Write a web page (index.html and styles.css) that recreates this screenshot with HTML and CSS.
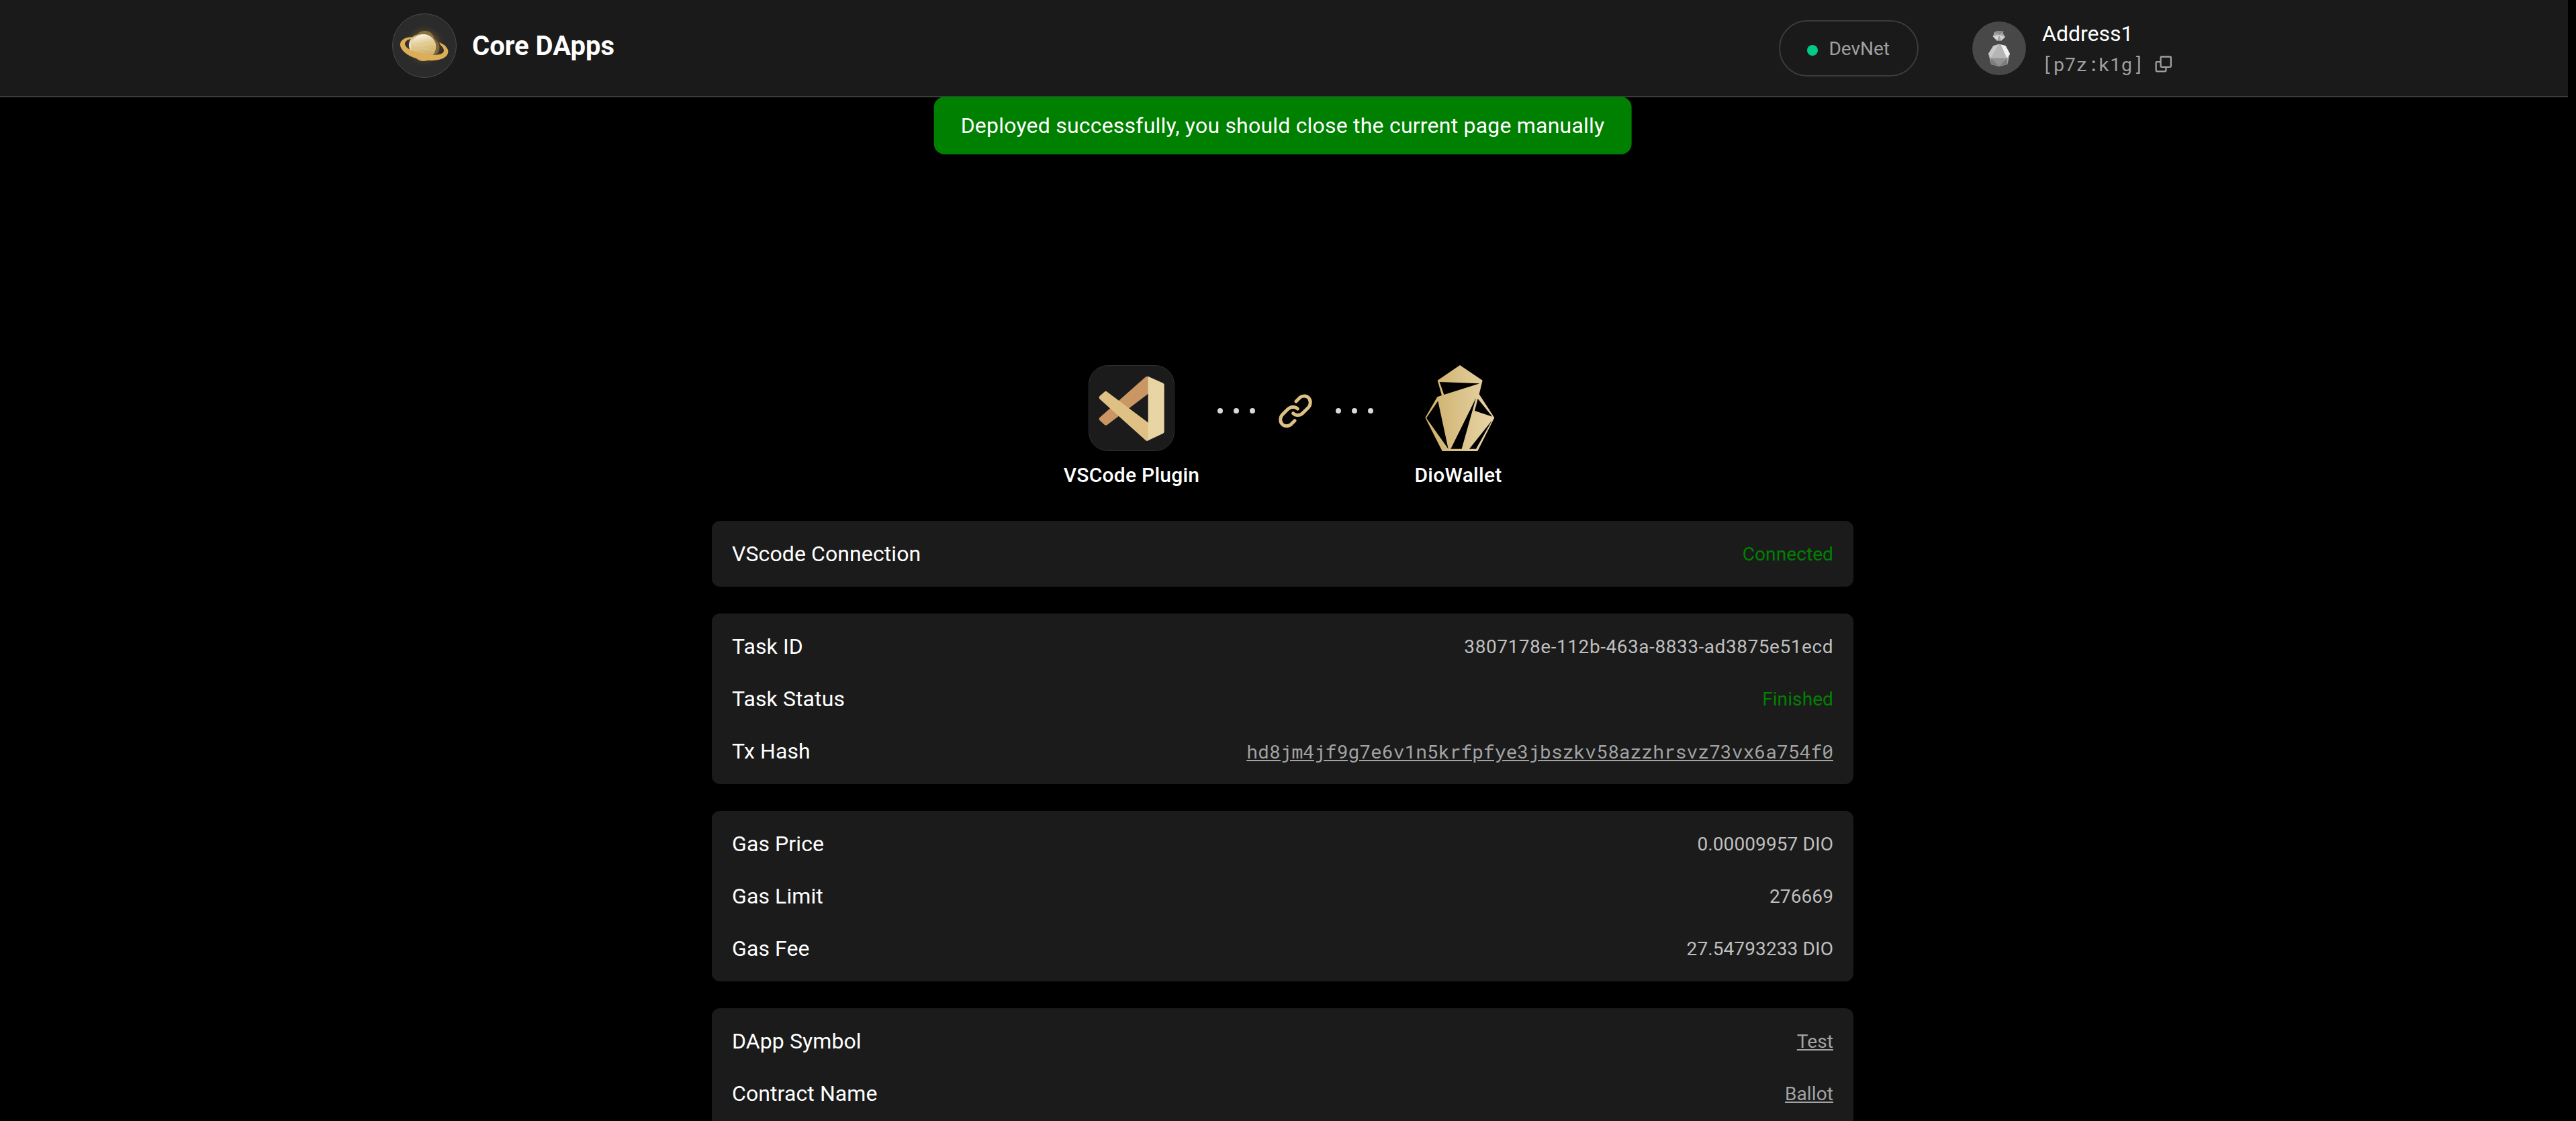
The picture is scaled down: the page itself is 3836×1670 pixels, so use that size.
FILE: index.html
```html
<!DOCTYPE html>
<html lang="en">
<head>
<meta charset="utf-8">
<title>Core DApps</title>
<link rel="stylesheet" href="styles.css">
</head>
<body>
<header class="header">
  <div class="brand">
    <svg class="brand-logo" viewBox="12 14 288 288">
      <defs>
        <radialGradient id="glow"><stop offset="0" stop-color="#b58c35" stop-opacity=".85"/><stop offset=".55" stop-color="#7a5f2b" stop-opacity=".6"/><stop offset="1" stop-color="#2b2b2b" stop-opacity="0"/></radialGradient>
        <linearGradient id="planet" x1=".4" y1="0" x2=".6" y2="1"><stop offset="0" stop-color="#fbf5e6"/><stop offset=".35" stop-color="#e3cd97"/><stop offset="1" stop-color="#c9a457"/></linearGradient>
        <linearGradient id="shade" x1="0" y1="0" x2="1" y2="0"><stop offset="0" stop-color="#f6ecd2"/><stop offset=".35" stop-color="#c5a665"/><stop offset="1" stop-color="#67522b"/></linearGradient>
      </defs>
      <circle cx="156" cy="158" r="142.5" fill="#2b2b2b" stroke="#4b4b4b" stroke-width="3"/>
      <circle cx="156" cy="158" r="98" fill="url(#glow)"/>
      <circle cx="158" cy="135" r="43" fill="#8a7142"/>
      <circle cx="180" cy="166" r="43" fill="#7d6537"/>
      <circle cx="136" cy="156" r="49" fill="url(#shade)"/>
      <circle cx="152" cy="180" r="47" fill="#c8ab6b"/>
      <circle cx="152" cy="163" r="56" fill="url(#planet)"/>
      <path d="M104 150q30 16 62 4t38 4M112 180q40-18 86 2" fill="none" stroke="#efdfb6" stroke-width="1.5" opacity=".7"/>
      <path d="M100 119C62 120 42 139 49 162C64 207 150 233 215 222C262 214 271 184 255 166C246 153 234 149 223 144C224 151 228 156 236 164C249 180 243 192 224 197C180 207 110 190 82 170C63 154 63 135 98 127Z" fill="#ddae55"/>
    </svg>
    <span class="brand-name">Core DApps</span>
  </div>
  <div class="account">
    <div class="network"><i class="network-dot"></i>DevNet</div>
    <svg class="avatar" viewBox="51 21 240 240">
      <circle cx="171" cy="141" r="120" fill="#484848"/>
      <path d="M165 63L192 66L187 72L198 90L180 107H162L143 88L150 68Z" fill="#a5a5a5"/>
      <path d="M150 68L171 80L192 66L165 63Z" fill="#8d8d8d"/>
      <path d="M143 88L171 80L162 107Z" fill="#d6d6d6"/>
      <path d="M171 80L198 90L180 107Z" fill="#d0d0d0"/>
      <path d="M171 122L200 130L219 165L208 213L171 222L135 213L123 165L145 130Z" fill="#aaa"/>
      <path d="M171 122L145 130L123 165L134 185Z" fill="#c8c8c8"/>
      <path d="M171 122L134 185H206L178 126Z" fill="#b5b5b5"/>
      <path d="M178 124L200 130L219 165L206 185Z" fill="#f2f2f2"/>
      <path d="M134 185H206L171 220Z" fill="#929292"/>
      <path d="M134 185L171 220L135 213ZM206 185L171 220L208 213Z" fill="#7c7c7c"/>
    </svg>
    <div class="account-text">
      <div class="account-name">Address1</div>
      <div class="account-address">[p7z:k1g]
        <svg class="copy" viewBox="868 176 76 74" fill="none" stroke="#a0a0a0" stroke-width="7"><rect x="894" y="179.500" width="46.500" height="46.500" rx="4"/><path d="M894 203H877Q873 203 873 207V242Q873 246 877 246H914Q918 246 918 242V226"/></svg>
      </div>
    </div>
  </div>
</header>
<div class="toast">Deployed successfully, you should close the current page manually</div>
<main class="main">
  <section class="link-flow">
    <div class="party plugin">
      <svg class="party-icon" viewBox="64 42 384 384">
        <rect x="65.5" y="43.500" width="381" height="381" rx="84" fill="#1b1b1b" stroke="#2f2f2f" stroke-width="3"/>
        <path d="M318 95Q324 90 332 93V169L147 309Q141 313 135 308L113 288Q108 283 113 277Z" fill="#c99664"/>
        <path d="M135 161Q141 156 147 161L332 300V378Q325 384 319 378L113 193Q108 187 113 181Z" fill="#dfc185"/>
        <path d="M330 92L397 122Q402 125 402 130V338Q402 344 397 347L330 379Z" fill="#e9d5a3"/>
      </svg>
      <span>VSCode Plugin</span>
    </div>
    <div class="connector">
      <div class="dots"><i></i><i></i><i></i></div>
      <svg class="chain" viewBox="912 170 150 150" fill="none" stroke="#dfc185" stroke-width="15" stroke-linecap="round"><path d="M990 203L1003 190C1012 178 1034 175 1045 186C1058 199 1055 219 1046 229L1020 255C1006 268 988 267 977 256M984 289L971 302C962 314 940 317 929 306C916 293 919 273 928 263L954 237C968 224 986 225 997 236"/></svg>
      <div class="dots"><i></i><i></i><i></i></div>
    </div>
    <div class="party wallet">
      <svg class="party-icon" viewBox="414 42 384 384">
        <defs><linearGradient id="gold"><stop offset="0" stop-color="#d0b06b"/><stop offset=".3" stop-color="#d5b97b"/><stop offset="1" stop-color="#e8d6a9"/></linearGradient></defs>
        <path fill="url(#gold)" fill-rule="evenodd" d="M612 42L713 110L698 172L766 277L691 426H533L457 277L511 184L531 177L512 110ZM521 117L700 124L541 174ZM514 202L560 416L462 278ZM684 188L571 416H620ZM692 192L757 272L678 246ZM756 288L654 416H684Z"/>
      </svg>
      <span>DioWallet</span>
    </div>
  </section>
  <section class="card">
    <div class="row"><span>VScode Connection</span><span class="value ok">Connected</span></div>
  </section>
  <section class="card">
    <div class="row"><span>Task ID</span><span class="value task-id">3807178e-112b-463a-8833-ad3875e51ecd</span></div>
    <div class="row"><span>Task Status</span><span class="value ok">Finished</span></div>
    <div class="row"><span>Tx Hash</span><a class="value link mono">hd8jm4jf9g7e6v1n5krfpfye3jbszkv58azzhrsvz73vx6a754f0</a></div>
  </section>
  <section class="card">
    <div class="row"><span>Gas Price</span><span class="value">0.00009957 DIO</span></div>
    <div class="row"><span>Gas Limit</span><span class="value">276669</span></div>
    <div class="row"><span>Gas Fee</span><span class="value">27.54793233 DIO</span></div>
  </section>
  <section class="card">
    <div class="row"><span>DApp Symbol</span><a class="value link">Test</a></div>
    <div class="row"><span>Contract Name</span><a class="value link">Ballot</a></div>
  </section>
</main>
</body>
</html>
```
FILE: styles.css
```css
* { box-sizing: border-box; }
html { background: #000; height: 100%; overflow: hidden; }
body {
  margin: 0;
  height: 100%;
  overflow: hidden;
  padding-right: 12px;
  background: #000;
  color: #fff;
  font: 32px/38px Roboto, sans-serif;
  position: relative;
}
.header {
  height: 145px;
  padding: 0 588px 0 584px;
  background: #1a1a1a;
  border-bottom: 2px solid #3b3b3b;
  display: flex;
  justify-content: space-between;
  align-items: center;
}
.brand { display: flex; align-items: center; gap: 23px; margin-bottom: 7px; }
.brand-logo { width: 96px; height: 96px; }
.brand-name { font-size: 40px; font-weight: 700; line-height: 48px; padding-top: 2px; }
.account { display: flex; align-items: center; }
.network {
  height: 84px;
  padding: 2px 41px 0 40px;
  border: 2px solid #3b3b3b;
  border-radius: 42px;
  display: flex;
  align-items: center;
  gap: 16px;
  margin-right: 80px;
  color: #a0a0a0;
  font-size: 28px;
}
.network-dot { width: 16px; height: 16px; border-radius: 50%; background: #00cc88; margin-top: 5px; }
.avatar { width: 80px; height: 80px; margin-right: 24px; }
.account-text { width: 195px; padding-top: 2px; }
.account-address {
  margin-top: 8px;
  color: #a0a0a0;
  font-family: "Roboto Mono", monospace;
  font-size: 28px;
  display: flex;
  align-items: center;
  gap: 17px;
}
.copy { width: 25px; height: 25px; }
.toast {
  position: absolute;
  top: 144px;
  left: 1910px;
  transform: translateX(-50%);
  height: 86px;
  padding: 24px 40px;
  border-radius: 16px;
  background: #008000;
  letter-spacing: 0.21px;
  white-space: nowrap;
}
.main { width: 1700px; margin: 399px 0 0 1060px; }
.link-flow { display: flex; padding-left: 523px; margin-bottom: 49px; }
.party { display: flex; flex-direction: column; align-items: center; gap: 17px; font-size: 30px; font-weight: 500; letter-spacing: 0.25px; }
.plugin { width: 204px; }
.wallet { width: 131px; }
.party-icon { width: 128px; height: 128px; }
.connector { display: flex; align-items: center; height: 136px; margin: 0 61px 0 26px; }
.dots { display: flex; gap: 16px; }
.dots i { width: 8px; height: 8px; border-radius: 50%; background: #d9d9d9; }
.chain { width: 50px; height: 50px; margin: 0 35px; }
.card {
  margin-bottom: 40px;
  padding: 30px;
  border-radius: 12px;
  background: #1b1b1b;
  display: flex;
  flex-direction: column;
  gap: 40px;
}
.row { display: flex; justify-content: space-between; align-items: center; height: 38px; letter-spacing: 0.1px; }
.value { font-size: 28px; color: #bfbfbf; padding-top: 2px; }
.task-id { letter-spacing: 0.55px; }
.ok { color: #008000; }
.link { color: #a3a3a3; text-decoration: underline; }
.mono { font-family: "Roboto Mono", monospace; letter-spacing: 0; }
```
